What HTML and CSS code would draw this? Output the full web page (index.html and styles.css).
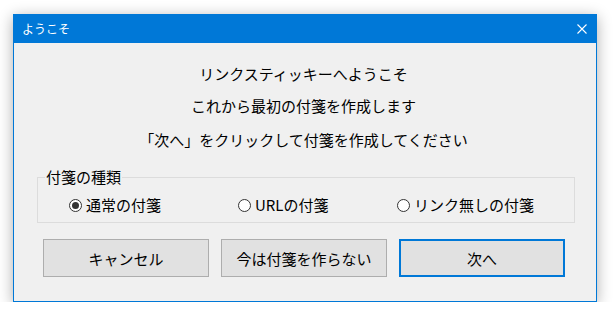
FILE: index.html
```html
<!DOCTYPE html>
<html lang="ja">
<head>
<meta charset="utf-8">
<title>ようこそ</title>
<link rel="stylesheet" href="styles.css">
</head>
<body>
<div class="window">
  <div class="titlebar">
    <span class="title">ようこそ</span>
    <svg class="close" width="10" height="10" viewBox="0 0 10 10"><path d="M0.5 0.5 L9.5 9.5 M9.5 0.5 L0.5 9.5" stroke="#fff" stroke-width="1.1" fill="none"/></svg>
  </div>
  <div class="content">
    <p class="msg m1">リンクスティッキーへようこそ</p>
    <p class="msg m2">これから最初の付箋を作成します</p>
    <p class="msg m3">「次へ」をクリックして付箋を作成してください</p>
    <fieldset class="group">
      <legend>付箋の種類</legend>
      <div class="radios">
        <label class="radio"><span class="dot checked"></span>通常の付箋</label>
        <label class="radio"><span class="dot"></span>URLの付箋</label>
        <label class="radio"><span class="dot"></span>リンク無しの付箋</label>
      </div>
    </fieldset>
    <div class="buttons">
      <button class="btn">キャンセル</button>
      <button class="btn">今は付箋を作らない</button>
      <button class="btn default">次へ</button>
    </div>
  </div>
</div>
</body>
</html>
```
FILE: styles.css
```css
html, body {
  margin: 0;
  padding: 0;
  background: #ffffff;
}
body {
  font-family: "Noto Sans CJK JP", "Noto Sans", sans-serif;
  color: #000;
  padding: 14px 0 0 13px;
}
.window {
  width: 582px;
  height: 286px;
  border: 1px solid #0078d7;
  background: #f0f0f0;
  box-shadow: 0 3px 14px rgba(0, 0, 0, 0.32);
}
.titlebar {
  height: 28px;
  background: #0078d7;
  display: flex;
  align-items: center;
  justify-content: space-between;
  padding: 0 9px 0 8px;
}
.title {
  color: #fff;
  font-size: 12px;
  line-height: 16px;
}
.close {
  display: block;
  margin-top: -1px;
}
.content {
  padding: 20px 0 0 0;
}
.msg {
  margin: 0;
  font-size: 15px;
  line-height: 22px;
  text-align: center;
  padding-right: 3px;
}
.m2 { margin-top: 10px; }
.m3 { margin-top: 12px; }
.group {
  margin: 16px 0 0 23px;
  box-sizing: border-box;
  width: 538px;
  border: 1px solid #dcdcdc;
  padding: 8px 0 7px 0;
}
.group legend {
  font-size: 15px;
  line-height: 20px;
  padding: 0 1px;
  margin-left: 7px;
}
.radios {
  display: grid;
  grid-template-columns: 169px 159px auto;
  padding-left: 31px;
  font-size: 15px;
  line-height: 20px;
}
.radio {
  display: flex;
  align-items: center;
  gap: 4px;
}
.dot {
  width: 11px;
  height: 11px;
  border: 1px solid #333;
  border-radius: 50%;
  background: #fff;
  display: flex;
  align-items: center;
  justify-content: center;
}
.dot.checked::after {
  content: "";
  width: 7px;
  height: 7px;
  border-radius: 50%;
  background: #333;
}
.buttons {
  display: flex;
  gap: 12px;
  margin: 16px 0 0 29px;
}
.btn {
  width: 166px;
  height: 38px;
  box-sizing: border-box;
  background: #e1e1e1;
  border: 1px solid #adadad;
  font-family: inherit;
  font-size: 15px;
  color: #000;
  padding: 0;
  margin: 0;
}
.btn.default {
  border: 2px solid #0078d7;
}
```
